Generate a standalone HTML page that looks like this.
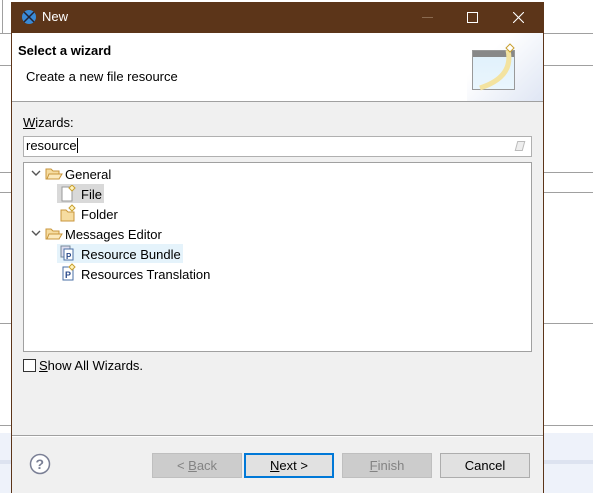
<!DOCTYPE html>
<html><head><style>
*{margin:0;padding:0;box-sizing:border-box}
body{width:593px;height:493px;position:relative;overflow:hidden;background:#fff;font-family:"Segoe UI","Liberation Sans","Noto Sans CJK SC",sans-serif;font-size:13px;color:#000}
.a{position:absolute}
.btn{position:absolute;top:453px;height:25px;width:90px;background:#e1e1e1;border:1px solid #adadad;text-align:center;line-height:24px;font-size:13px}
.dis{background:#cccccc;border-color:#bfbfbf;color:#838383}
.row{position:absolute;height:19px;line-height:19px;font-size:13px}
</style></head><body>
<div class="a" style="left:2px;top:0;width:1px;height:33px;background:#a0a0a0"></div>
<div class="a" style="left:0;top:33px;width:593px;height:1px;background:#a0a0a0"></div>
<div class="a" style="left:0;top:65px;width:593px;height:1px;background:#a0a0a0"></div>
<div class="a" style="left:0;top:172px;width:593px;height:1px;background:#a0a0a0"></div>
<div class="a" style="left:0;top:192px;width:593px;height:1px;background:#a0a0a0"></div>
<div class="a" style="left:0;top:323px;width:593px;height:1px;background:#a0a0a0"></div>
<div class="a" style="left:0;top:425px;width:593px;height:1px;background:#a0a0a0"></div>
<div class="a" style="left:0;top:433px;width:593px;height:60px;background:#eef2fa"></div>
<div class="a" style="left:0;top:460px;width:593px;height:4px;background:#dde3f0"></div>
<div class="a" style="left:11px;top:2px;width:533px;height:491px;background:#f0f0f0;border:1px solid #5c3519;border-bottom:none"></div>
<div class="a" style="left:11px;top:2px;width:533px;height:31px;background:#5c3519"></div>
<svg class="a" style="left:21px;top:9px" width="16" height="16"><circle cx="8" cy="8" r="7" fill="#3a8ad6"/><path d="M3 3L13 13M13 3L3 13" stroke="#223" stroke-width="1.5"/></svg>
<div class="a" style="left:42px;top:9px;color:#fff;font-size:13px">New</div>
<div class="a" style="left:422px;top:17px;width:11px;height:1px;background:#8a6a50"></div>
<div class="a" style="left:467px;top:12px;width:11px;height:11px;border:1px solid #fff"></div>
<svg class="a" style="left:513px;top:12px" width="11" height="11"><path d="M0 0L11 11M11 0L0 11" stroke="#fff" stroke-width="1.1"/></svg>
<div class="a" style="left:12px;top:33px;width:531px;height:69px;background:#fff;border-bottom:1px solid #a0a0a0"></div>
<div class="a" style="left:467px;top:33px;width:76px;height:68px;background:linear-gradient(135deg,#fff 30%,#dfe6f4)"></div>
<div class="a" style="left:472px;top:50px;width:43px;height:40px;border:1px solid #999;background:linear-gradient(#dff0fb,#eaf6fd)"><div style="height:6px;background:#888"></div></div>
<svg class="a" style="left:478px;top:42px" width="40" height="50"><path d="M30 8Q36 35 2 46" stroke="#f3e3a0" stroke-width="5" fill="none"/><path d="M32 2L36 6L32 10L28 6Z" fill="#fff" stroke="#c9a030"/></svg>
<div class="a" style="left:18px;top:43px;font-weight:bold;font-size:13px">Select a wizard</div>
<div class="a" style="left:26px;top:69px">Create a new file resource</div>
<div class="a" style="left:23px;top:115px"><u>W</u>izards:</div>
<div class="a" style="left:23px;top:136px;width:509px;height:21px;background:#fff;border:1px solid #b0b0b0"></div>
<div class="a" style="left:26px;top:138px">resource<span style="display:inline-block;width:1px;height:15px;background:#000;vertical-align:-3px"></span></div>
<div class="a" style="left:516px;top:141px;width:8px;height:10px;border:1px solid #bbb;transform:skewX(-15deg);background:#eee"></div>
<div class="a" style="left:23px;top:162px;width:509px;height:190px;background:#fff;border:1px solid #a0a0a0"></div>
<div class="a" style="left:57px;top:184px;width:47px;height:19px;background:#d9d9d9"></div>
<div class="a" style="left:57px;top:244px;width:126px;height:19px;background:#e5f3fb"></div>
<svg class="a" style="left:30px;top:168px" width="40" height="110">
<path d="M2 3L6 7L10 3" stroke="#555" fill="none" stroke-width="1.4"/>
<path d="M2 63L6 67L10 63" stroke="#555" fill="none" stroke-width="1.4"/>
<path d="M16 1H21L23 3H29V11H16Z" fill="#f6dca0" stroke="#c8963c"/><path d="M17 11L19 6H32L29 11Z" fill="#fbe9bd" stroke="#c8963c"/>
<path d="M16 61H21L23 63H29V71H16Z" fill="#f6dca0" stroke="#c8963c"/><path d="M17 71L19 66H32L29 71Z" fill="#fbe9bd" stroke="#c8963c"/>
</svg>
<svg class="a" style="left:60px;top:185px" width="18" height="100">
<path d="M2 2H10L12 4V16H2Z" fill="#fff" stroke="#999"/><path d="M12 0L15 3L12 6L9 3Z" fill="#fff3c0" stroke="#c9a030"/>
<path d="M1 25H6L8 27H14V36H1Z" fill="#f6dca0" stroke="#c8963c"/><path d="M12 20L15 23L12 26L9 23Z" fill="#fff3c0" stroke="#c9a030"/>
<rect x="1" y="61" width="9" height="11" fill="#dde" stroke="#789"/><rect x="4" y="64" width="9" height="11" fill="#fff" stroke="#4a6fa5"/><text x="6" y="74" font-size="8" fill="#2a4a8a" font-weight="bold">P</text>
<rect x="3" y="82" width="10" height="13" fill="#fff" stroke="#4a6fa5"/><text x="5" y="93" font-size="9" fill="#2a4a8a" font-weight="bold">P</text><path d="M12 79L15 82L12 85L9 82Z" fill="#fff3c0" stroke="#c9a030"/>
</svg>
<div class="row" style="left:65px;top:165px">General</div>
<div class="row" style="left:81px;top:185px">File</div>
<div class="row" style="left:81px;top:205px">Folder</div>
<div class="row" style="left:65px;top:225px">Messages Editor</div>
<div class="row" style="left:81px;top:245px">Resource Bundle</div>
<div class="row" style="left:81px;top:265px">Resources Translation</div>
<div class="a" style="left:23px;top:359px;width:13px;height:13px;border:1px solid #333;background:#fff"></div>
<div class="a" style="left:39px;top:358px"><u>S</u>how All Wizards.</div>
<div class="a" style="left:12px;top:435px;width:531px;height:1px;background:#a0a0a0"></div>
<div class="a" style="left:12px;top:436px;width:531px;height:1px;background:#fff"></div>
<svg class="a" style="left:29px;top:453px" width="22" height="22"><circle cx="11" cy="11" r="9.5" fill="#fff" stroke="#7a7f95" stroke-width="1.5"/><text x="6.5" y="16" font-size="14" font-weight="bold" fill="#7a7f95" font-family="Liberation Sans">?</text></svg>
<div class="btn dis" style="left:152px">&lt; <u>B</u>ack</div>
<div class="btn" style="left:244px;border:2px solid #0078d7;line-height:22px"><u>N</u>ext &gt;</div>
<div class="btn dis" style="left:342px"><u>F</u>inish</div>
<div class="btn" style="left:440px">Cancel</div>
</body></html>
